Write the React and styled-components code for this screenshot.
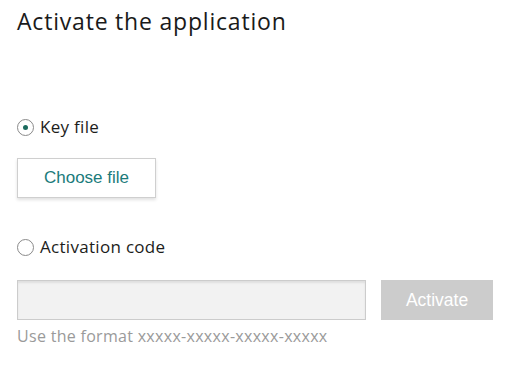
import React from "react";
import styled, { createGlobalStyle } from "styled-components";

const Global = createGlobalStyle`
  html, body { margin: 0; padding: 0; background: #fff; }
  body { font-family: "Open Sans", "Noto Sans", sans-serif; }
`;

const Page = styled.div`
  width: 511px;
  height: 366px;
  box-sizing: border-box;
  padding: 6px 17px 0 17px;
  display: flex;
  flex-direction: column;
  align-items: flex-start;
`;

const Title = styled.h1`
  margin: 0;
  font-size: 23px;
  letter-spacing: 0.8px;
  font-weight: 400;
  color: #1a1a1a;
  line-height: 30px;
`;

const Option = styled.label`
  display: flex;
  align-items: center;
  gap: 6px;
  margin-top: ${(p) => p.$top}px;
  font-size: 17px;
  letter-spacing: 0.3px;
  color: #1d1d1b;
  line-height: 22px;
`;

const Radio = styled.span`
  width: 17px;
  height: 17px;
  box-sizing: border-box;
  border: 1px solid #8a8a8a;
  border-radius: 50%;
  display: flex;
  align-items: center;
  justify-content: center;
  &::after {
    content: "";
    width: 5px;
    height: 5px;
    border-radius: 50%;
    background: ${(p) => (p.$checked ? "#1b6b5e" : "transparent")};
  }
`;

const FileButton = styled.button`
  margin-top: 20px;
  width: 139px;
  height: 40px;
  background: #fff;
  border: 1px solid #cfcfcf;
  box-shadow: 0 2px 3px rgba(0, 0, 0, 0.12);
  font-family: "Liberation Sans", Arial, sans-serif;
  font-size: 17px;
  color: #1b7b7b;
  padding: 0;
`;

const Row = styled.div`
  display: flex;
  gap: 15px;
  margin-top: 22px;
`;

const CodeInput = styled.div`
  width: 349px;
  height: 40px;
  box-sizing: border-box;
  background: #f2f2f2;
  border: 1px solid #cccccc;
  box-shadow: inset 0 2px 2px rgba(0, 0, 0, 0.08);
`;

const ActivateButton = styled.button`
  width: 112px;
  height: 40px;
  border: none;
  background: #cccccc;
  color: #fff;
  font-family: "Liberation Sans", Arial, sans-serif;
  font-size: 17.5px;
  padding: 0;
`;

const Hint = styled.div`
  margin-top: 6px;
  font-size: 16px;
  letter-spacing: 0.3px;
  color: #9a9a9a;
  line-height: 20px;
`;

export default function App() {
  return (
    <>
      <Global />
      <Page>
        <Title>Activate the application</Title>
        <Option $top={80}>
          <Radio $checked />
          Key file
        </Option>
        <FileButton>Choose file</FileButton>
        <Option $top={38}>
          <Radio />
          Activation code
        </Option>
        <Row>
          <CodeInput />
          <ActivateButton>Activate</ActivateButton>
        </Row>
        <Hint>Use the format xxxxx-xxxxx-xxxxx-xxxxx</Hint>
      </Page>
    </>
  );
}
